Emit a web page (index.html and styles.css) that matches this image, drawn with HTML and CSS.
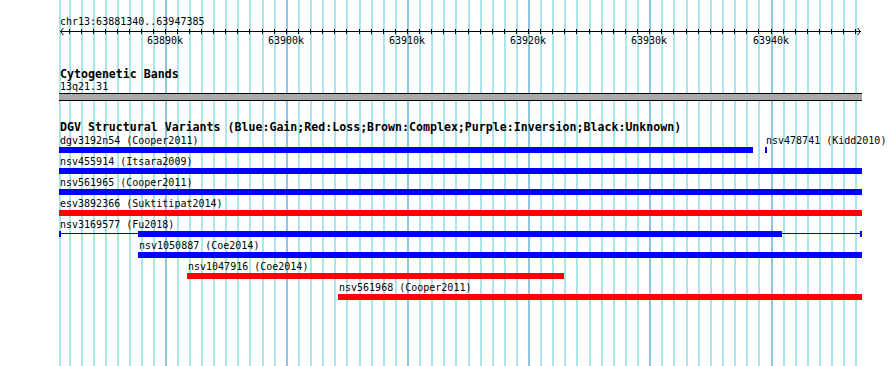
FILE: index.html
```html
<!DOCTYPE html>
<html>
<head>
<meta charset="utf-8">
<title>DGV track view</title>
<link rel="stylesheet" href="styles.css">
</head>
<body>
<div class="panel">
  <div class="track">
    <svg class="grid" width="803" height="366" viewBox="59 0 803 366" shape-rendering="crispEdges">
      <path class="minor" d="M60 0V366M70 0V366M82 0V366M94 0V366M106 0V366M118 0V366M130 0V366M142 0V366M154 0V366M178 0V366M190 0V366M202 0V366M214 0V366M226 0V366M238 0V366M250 0V366M263 0V366M275 0V366M299 0V366M311 0V366M323 0V366M335 0V366M347 0V366M360 0V366M372 0V366M384 0V366M396 0V366M420 0V366M432 0V366M444 0V366M456 0V366M469 0V366M481 0V366M493 0V366M505 0V366M517 0V366M541 0V366M553 0V366M565 0V366M577 0V366M590 0V366M602 0V366M614 0V366M626 0V366M638 0V366M662 0V366M674 0V366M687 0V366M699 0V366M711 0V366M723 0V366M735 0V366M747 0V366M759 0V366M784 0V366M796 0V366M808 0V366M820 0V366M832 0V366M844 0V366M856 0V366"/>
      <path class="major" d="M166 0V366M287 0V366M408 0V366M529 0V366M650 0V366M772 0V366"/>
    </svg>

    <svg class="ruler" width="803" height="68" viewBox="59 0 803 68" shape-rendering="crispEdges">
      <text x="60" y="25">chr13:63881340..63947385</text>
      <path class="axis" d="M60 31.5H861"/>
      <path class="axis" shape-rendering="auto" d="M63.5 28L60.5 31.5L63.5 35M857.5 28L860.5 31.5L857.5 35"/>
      <path class="axis" d="M69.5 29V34M81.5 29V34M93.5 29V34M105.5 29V34M117.5 29V34M129.5 29V34M141.5 29V34M153.5 29V34M165.5 29V34M177.5 29V34M189.5 29V34M201.5 29V34M213.5 29V34M225.5 29V34M237.5 29V34M249.5 29V34M262.5 29V34M274.5 29V34M286.5 29V34M298.5 29V34M310.5 29V34M322.5 29V34M334.5 29V34M346.5 29V34M359.5 29V34M371.5 29V34M383.5 29V34M395.5 29V34M407.5 29V34M419.5 29V34M431.5 29V34M443.5 29V34M455.5 29V34M468.5 29V34M480.5 29V34M492.5 29V34M504.5 29V34M516.5 29V34M528.5 29V34M540.5 29V34M552.5 29V34M564.5 29V34M576.5 29V34M589.5 29V34M601.5 29V34M613.5 29V34M625.5 29V34M637.5 29V34M649.5 29V34M661.5 29V34M673.5 29V34M686.5 29V34M698.5 29V34M710.5 29V34M722.5 29V34M734.5 29V34M746.5 29V34M758.5 29V34M771.5 29V34M783.5 29V34M795.5 29V34M807.5 29V34M819.5 29V34M831.5 29V34M843.5 29V34M855.5 29V34"/>
      <text x="165" y="44" text-anchor="middle">63890k</text>
      <text x="286" y="44" text-anchor="middle">63900k</text>
      <text x="407" y="44" text-anchor="middle">63910k</text>
      <text x="528" y="44" text-anchor="middle">63920k</text>
      <text x="649" y="44" text-anchor="middle">63930k</text>
      <text x="771" y="44" text-anchor="middle">63940k</text>
    </svg>

    <div class="title">Cytogenetic Bands</div>
    <div class="band-label">13q21.31</div>
    <div class="band"></div>

    <div class="title dgv-title">DGV Structural Variants (Blue:Gain;Red:Loss;Brown:Complex;Purple:Inversion;Black:Unknown)</div>

    <div class="row">
      <div class="feat" style="margin-left:0;width:694px"><div class="flabel">dgv3192n54 (Cooper2011)</div><div class="bar gain"></div></div>
      <div class="feat" style="margin-left:12px;width:2px"><div class="flabel">nsv478741 (Kidd2010)</div><div class="bar gain"></div></div>
    </div>
    <div class="row">
      <div class="feat" style="margin-left:0;width:803px"><div class="flabel">nsv455914 (Itsara2009)</div><div class="bar gain"></div></div>
    </div>
    <div class="row">
      <div class="feat" style="margin-left:0;width:803px"><div class="flabel">nsv561965 (Cooper2011)</div><div class="bar gain"></div></div>
    </div>
    <div class="row">
      <div class="feat" style="margin-left:0;width:803px"><div class="flabel">esv3892366 (Suktitipat2014)</div><div class="bar loss"></div></div>
    </div>
    <div class="row">
      <div class="feat" style="margin-left:0;width:803px">
        <div class="flabel">nsv3169577 (Fu2018)</div>
        <div class="segbar">
          <div class="cap"></div>
          <div class="thin" style="width:77px"></div>
          <div class="thick" style="width:644px"></div>
          <div class="thin" style="width:78px"></div>
          <div class="cap"></div>
        </div>
      </div>
    </div>
    <div class="row">
      <div class="feat" style="margin-left:79px;width:724px"><div class="flabel">nsv1050887 (Coe2014)</div><div class="bar gain"></div></div>
    </div>
    <div class="row">
      <div class="feat" style="margin-left:128px;width:377px"><div class="flabel">nsv1047916 (Coe2014)</div><div class="bar loss"></div></div>
    </div>
    <div class="row">
      <div class="feat" style="margin-left:279px;width:524px"><div class="flabel">nsv561968 (Cooper2011)</div><div class="bar loss"></div></div>
    </div>
  </div>
</div>
</body>
</html>
```
FILE: styles.css
```css
html, body {
  margin: 0;
  padding: 0;
  background: #ffffff;
}

body {
  font-family: "DejaVu Sans Mono", "Liberation Mono", monospace;
  color: #000000;
}

.panel {
  width: 890px;
  height: 366px;
  overflow: hidden;
}

.track {
  position: relative;
  z-index: 0;
  margin-left: 59px;
  width: 803px;
  height: 366px;
}

.grid {
  position: absolute;
  left: 0;
  top: 0;
  z-index: -1;
}

.grid .minor {
  stroke: #a8e6eb;
  stroke-width: 2;
  fill: none;
}

.grid .major {
  stroke: #8cc6e2;
  stroke-width: 2;
  fill: none;
}

.ruler {
  display: block;
  overflow: visible;
}

.ruler text {
  font-family: "DejaVu Sans Mono", "Liberation Mono", monospace;
  font-size: 10px;
  fill: #000000;
}

.ruler .axis {
  stroke: #000000;
  stroke-width: 1;
  fill: none;
}

.title {
  font-weight: bold;
  font-size: 11.6px;
  line-height: 13px;
  height: 13px;
  white-space: nowrap;
  padding-left: 1px;
}

.band-label {
  font-size: 10px;
  line-height: 12px;
  height: 12px;
  padding-left: 1px;
  white-space: nowrap;
}

.band {
  height: 6px;
  background: #aaaaaa;
  border-top: 1px solid #000000;
  border-bottom: 1px solid #000000;
}

.dgv-title {
  margin-top: 20px;
}

.row {
  display: flex;
  height: 21px;
}

.feat {
  flex: none;
  min-width: 0;
}

.flabel {
  font-size: 10px;
  line-height: 13px;
  height: 13px;
  white-space: nowrap;
  padding-left: 1px;
}

.bar {
  height: 6px;
}

.gain {
  background: #0000ff;
}

.loss {
  background: #ff0000;
}

.segbar {
  display: flex;
  height: 6px;
}

.segbar .cap {
  flex: none;
  width: 2px;
  height: 6px;
  background: #0000ff;
}

.segbar .thick {
  flex: none;
  height: 6px;
  background: #0000ff;
}

.segbar .thin {
  flex: none;
  height: 1px;
  margin-top: 2px;
  background: #0000c8;
}
```
